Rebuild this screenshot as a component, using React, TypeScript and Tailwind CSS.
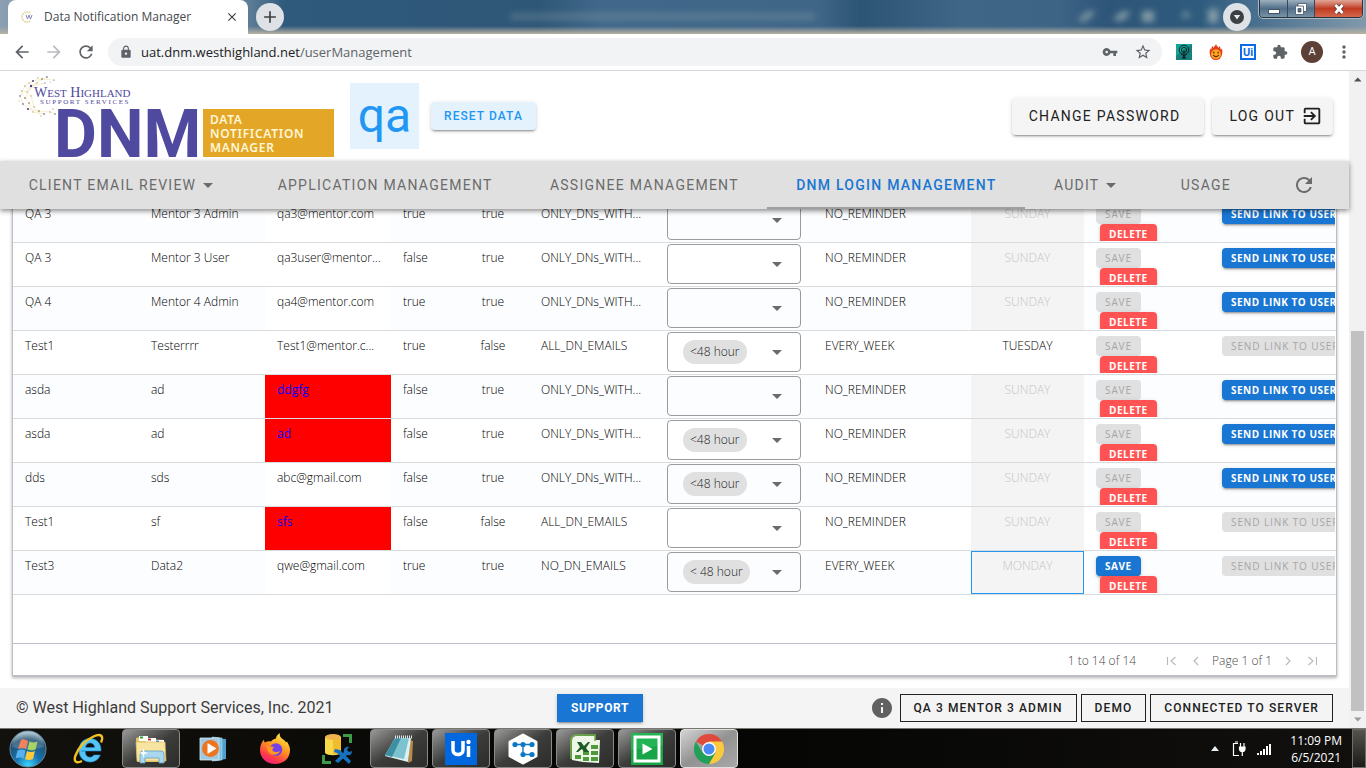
import React from "react";
import {
  MdArrowBack,
  MdArrowDropDown,
  MdArrowForward,
  MdClose,
  MdExitToApp,
  MdExtension,
  MdInfo,
  MdLock,
  MdMoreVert,
  MdRefresh,
  MdStarBorder,
  MdVpnKey,
  MdAdd,
} from "react-icons/md";

type Row = {
  first: string;
  last: string;
  email: string;
  invalid?: boolean;
  admin: string;
  active: string;
  mode: string;
  chip: string;
  reminder: string;
  day: string;
  dayEnabled?: boolean;
  focused?: boolean;
  canSave?: boolean;
  canSend?: boolean;
};

const rows: Row[] = [
  { first: "QA 3", last: "Mentor 3 Admin", email: "qa3@mentor.com", admin: "true", active: "true", mode: "ONLY_DNs_WITH...", chip: "", reminder: "NO_REMINDER", day: "SUNDAY", canSend: true },
  { first: "QA 3", last: "Mentor 3 User", email: "qa3user@mentor...", admin: "false", active: "true", mode: "ONLY_DNs_WITH...", chip: "", reminder: "NO_REMINDER", day: "SUNDAY", canSend: true },
  { first: "QA 4", last: "Mentor 4 Admin", email: "qa4@mentor.com", admin: "true", active: "true", mode: "ONLY_DNs_WITH...", chip: "", reminder: "NO_REMINDER", day: "SUNDAY", canSend: true },
  { first: "Test1", last: "Testerrrr", email: "Test1@mentor.c...", admin: "true", active: "false", mode: "ALL_DN_EMAILS", chip: "<48 hour", reminder: "EVERY_WEEK", day: "TUESDAY", dayEnabled: true },
  { first: "asda", last: "ad", email: "ddgfg", invalid: true, admin: "false", active: "true", mode: "ONLY_DNs_WITH...", chip: "", reminder: "NO_REMINDER", day: "SUNDAY", canSend: true },
  { first: "asda", last: "ad", email: "ad", invalid: true, admin: "false", active: "true", mode: "ONLY_DNs_WITH...", chip: "<48 hour", reminder: "NO_REMINDER", day: "SUNDAY", canSend: true },
  { first: "dds", last: "sds", email: "abc@gmail.com", admin: "false", active: "true", mode: "ONLY_DNs_WITH...", chip: "<48 hour", reminder: "NO_REMINDER", day: "SUNDAY", canSend: true },
  { first: "Test1", last: "sf", email: "sfs", invalid: true, admin: "false", active: "false", mode: "ALL_DN_EMAILS", chip: "", reminder: "NO_REMINDER", day: "SUNDAY" },
  { first: "Test3", last: "Data2", email: "qwe@gmail.com", admin: "true", active: "true", mode: "NO_DN_EMAILS", chip: "< 48 hour", reminder: "EVERY_WEEK", day: "MONDAY", focused: true, canSave: true },
];

const tabs = [
  { label: "CLIENT EMAIL REVIEW", menu: true },
  { label: "APPLICATION MANAGEMENT" },
  { label: "ASSIGNEE MANAGEMENT" },
  { label: "DNM LOGIN MANAGEMENT", active: true },
  { label: "AUDIT", menu: true },
  { label: "USAGE" },
];

const raised = "shadow-[0_3px_1px_-2px_rgba(0,0,0,0.2),0_2px_2px_0_rgba(0,0,0,0.14),0_1px_5px_0_rgba(0,0,0,0.12)]";

/* ---------- browser window ---------- */

function TitleBar() {
  return (
    <div className="relative flex h-[34px] shrink-0 items-start overflow-hidden bg-[linear-gradient(90deg,#8ba0b2_0,#6f8ba2_60px,#5c7c96_250px,#2f5a7c_285px,#2e5677_540px,#41688a_600px,#3f6587_820px,#2c5475_860px,#3f6587_960px,#3d6385_1060px,#2d5577_1110px,#2f5b7e_1200px,#4b7190_1260px,#8199ab_1366px)]">
      <svg className="absolute inset-0 h-full w-full" viewBox="0 0 1366 34" preserveAspectRatio="none" aria-hidden="true">
        <defs>
          <filter id="haze" x="-10%" y="-60%" width="120%" height="220%"><feGaussianBlur stdDeviation="3" /></filter>
          <linearGradient id="edge" x1="0" y1="0" x2="0" y2="1">
            <stop offset="0" stopColor="#b3ad9f" stopOpacity="0" />
            <stop offset="1" stopColor="#b9b3a4" />
          </linearGradient>
        </defs>
        <g filter="url(#haze)" fill="#9cb0b4">
          <rect x="510" y="13" width="305" height="7" opacity=".28" />
          <path d="M1078 20l10-9 8 1-12 10zM1112 20l10-9 9 1-8 9zM1142 11h12v11h-12zM1180 17l6-6 5 6zM1208 9h10v14h-10z" opacity=".75" />
        </g>
        <rect y="26" width="1366" height="8" fill="url(#edge)" />
      </svg>
      <div className="relative ml-2 flex h-[34px] w-60 items-center rounded-t-lg bg-white pr-2 pl-3 font-['Open_Sans',sans-serif] text-xs text-[#45494d]">
        <svg className="mr-2 h-4 w-4 shrink-0" viewBox="0 0 16 16" aria-hidden="true">
          <circle cx="7" cy="8" r="5" fill="none" stroke="#e3d7a8" strokeWidth="2" strokeDasharray="1.400 .8" pathLength="30" />
          <path d="M13 2v12" stroke="#fff" strokeWidth="4" />
          <path d="M6 6l1.500 4 1.500-4 1.500 4L12 6" fill="none" stroke="#8b85bd" strokeWidth="1" />
        </svg>
        <span className="flex-1 whitespace-nowrap">Data Notification Manager</span>
        <button aria-label="Close tab" className="grid h-4 w-4 place-items-center text-[#3c4043]"><MdClose className="h-3.5 w-3.5" /></button>
      </div>
      <button aria-label="New tab" className="relative mt-[3px] ml-2 grid h-7 w-7 place-items-center rounded-full bg-[#dee1e6] text-[#3c4043]"><MdAdd className="h-5 w-5" /></button>
      <button aria-label="Search tabs" className="relative mt-[3px] ml-auto grid h-7 w-7 place-items-center rounded-full bg-[#dee1e6]">
        <svg viewBox="0 0 14 14" className="h-3.5 w-3.5" aria-hidden="true"><circle cx="7" cy="7" r="7" fill="#3c4043" /><path d="M3.800 5h6.400L7 9.600z" fill="#e8eaed" /></svg>
      </button>
      <div className="relative mr-[3px] ml-2 flex h-[18px] overflow-hidden rounded-b border border-t-0 border-[#26343f] outline outline-[#a8b7c4]">
        <button aria-label="Minimize" className="grid w-7 place-items-center border-r border-[#34495a] bg-linear-to-b from-[#9db0be] via-[#52708a] to-[#7892a6]">
          <svg viewBox="0 0 14 12" className="h-3 w-3.5" aria-hidden="true"><rect x="1.500" y="6.500" width="11" height="4" fill="#fff" stroke="#455463" /></svg>
        </button>
        <button aria-label="Restore" className="grid w-[27px] place-items-center border-r border-[#34495a] bg-linear-to-b from-[#9db0be] via-[#52708a] to-[#7892a6]">
          <svg viewBox="0 0 14 14" className="h-3.5 w-3.5" aria-hidden="true"><g stroke="#455463" strokeWidth=".8"><path d="M4 1.500h8.500v8H4z" fill="#fff" /><path d="M1.500 4h8v8.500h-8z" fill="#fff" /><path d="M4 6.500h3V10H4z" fill="#52708a" /></g></svg>
        </button>
        <button aria-label="Close window" className="grid w-[47px] place-items-center bg-linear-to-b from-[#e0a598] via-[#bf3a20] to-[#d4664c]">
          <svg viewBox="0 0 14 12" className="h-3 w-3.5" aria-hidden="true"><path d="M3.500 2l7 8M10.500 2l-7 8" stroke="#5a3a38" strokeWidth="4.400" /><path d="M3.500 2l7 8M10.500 2l-7 8" stroke="#fff" strokeWidth="2.800" /></svg>
        </button>
      </div>
    </div>
  );
}

function AddressBar() {
  return (
    <div className="flex h-[37px] shrink-0 items-center border-b border-[#d5d7da] bg-white px-3 text-[#5f6368]">
      <button aria-label="Back" className="mr-3 grid h-5 w-5 place-items-center"><MdArrowBack className="h-5 w-5" /></button>
      <button aria-label="Forward" className="mr-3 grid h-5 w-5 place-items-center text-[#b9bbbe]"><MdArrowForward className="h-5 w-5" /></button>
      <button aria-label="Reload" className="mr-3 grid h-5 w-5 place-items-center"><MdRefresh className="h-5 w-5" /></button>
      <div className="flex h-7 flex-1 items-center rounded-full bg-[#f1f3f4] pr-2.5 pl-[11px]">
        <MdLock className="h-3.5 w-3.5" />
        <span className="ml-2 flex-1 pt-px font-['Open_Sans',sans-serif] text-[13px]"><span className="text-[#202124]">uat.dnm.westhighland.net</span>/userManagement</span>
        <button aria-label="Saved password" className="mr-4"><MdVpnKey className="h-4 w-4" /></button>
        <button aria-label="Bookmark"><MdStarBorder className="h-[18px] w-[18px]" /></button>
      </div>
      <div className="flex items-center gap-4 pl-3.5">
        <svg viewBox="0 0 16 16" className="h-4 w-4" aria-hidden="true"><path fill="#14a39a" d="M0 0h16v16H0z" /><path d="M0 12L16 0v16H0z" fill="#155e5b" opacity=".5" /><g fill="none" stroke="#0f2624" strokeWidth="1"><circle cx="8" cy="6" r="4.800" /><circle cx="8" cy="6" r="2.600" /><path d="M8 6v7M5 10l3 2 3-2" /></g><path d="M5.500 14.500L7.200 12h1.600l1.700 2.500z" fill="#0f2624" /></svg>
        <svg viewBox="0 0 16 16" className="h-4 w-4" aria-hidden="true"><path d="M8 0c.5 2 2 2.500 2.600 4 .5-.6.500-1.400.400-2 1.300 1 1.700 2.300 1.500 3.600.8-.1 1.200-.6 1.400-1.200C15 7 14.600 16 8 16S1 8 2.200 4.500c.2.700.6 1 1.200 1.200C3.300 3.500 4 2.500 5 2c0 1 .1 1.500.6 2C5.800 2.500 7.500 1.800 8 0z" fill="#e6391c" /><circle cx="8" cy="10.200" r="4.900" fill="#fba61c" /><path d="M5.800 7.800v1.800M10.200 7.800v1.800M5.200 11.200q2.800 2.800 5.600 0" fill="none" stroke="#5a2208" strokeWidth="1.200" /></svg>
        <span className="grid h-4 w-4 place-items-center border-2 border-[#0b6be8] bg-white font-['Roboto',sans-serif] text-[11px] leading-none font-bold text-[#0b6be8]">Ui</span>
        <MdExtension className="h-4 w-4" />
      </div>
      <span className="ml-[13px] grid h-[22px] w-[22px] place-items-center rounded-full bg-[#5d4037] font-['Roboto',sans-serif] text-[11px] text-white">A</span>
      <button aria-label="Menu" className="ml-[11px]"><MdMoreVert className="h-5 w-5" /></button>
    </div>
  );
}

/* ---------- application ---------- */

const dots: [number, number, number][] = [
  [30, 3, 0.8], [25, 5, 1.1], [21, 4, 0.7], [16, 7, 1], [12, 9, 0.7], [8, 12, 0.8], [14, 12, 1.2], [5, 17, 0.8],
  [10, 18, 0.7], [3, 22, 0.7], [8, 24, 1.1], [14, 22, 0.7], [6, 30, 0.8], [12, 29, 0.9], [17, 33, 0.8], [11, 35, 1.1],
  [16, 38, 0.7], [22, 37, 1], [27, 40, 0.8], [33, 38, 0.8], [36, 35, 0.7], [38, 40, 0.7], [20, 9, 0.7], [33, 8, 0.6],
  [28, 9, 0.6], [2, 27, 0.6], [24, 42, 0.6], [37, 6, 0.6],
];

function Logo() {
  return (
    <svg viewBox="0 0 320 84" className="h-[84px] w-80 shrink-0" role="img" aria-label="West Highland Support Services DNM">
      <g transform="translate(2 0)">
        <path d="M37 6L25 5 16 7 8 12 5 17 3 22 6 30 11 35 22 37 33 38 38 40M30 3L14 12 8 24 12 29 16 38 27 40M20 9L10 18 14 22 17 33 24 42M28 9L14 12 3 22" fill="none" stroke="#efe6bd" strokeWidth=".7" />
        {dots.map(([x, y, r], i) => <circle key={i} cx={x} cy={y} r={r} fill={i % 3 === 0 ? "#4a4280" : "#b3a266"} />)}
      </g>
      <g fill="#5049a0">
        <text x="19" y="23" fontFamily="Liberation Serif, serif" fontSize="14">W<tspan fontSize="11">EST</tspan> H<tspan fontSize="11">IGHLAND</tspan></text>
        <text x="25" y="30" fontFamily="Liberation Serif, serif" fontSize="7" letterSpacing="1.600">SUPPORT SERVICES</text>
        <text x="39" y="83" fontFamily="Roboto, sans-serif" fontSize="66" fontWeight="700">DNM</text>
      </g>
      <rect x="188" y="35" width="131" height="48" fill="#e3a626" />
      <g fill="#fff7d6" fontFamily="Noto Sans, sans-serif" fontSize="12" fontWeight="600" letterSpacing=".7">
        <text x="195" y="50">DATA</text>
        <text x="195" y="64">NOTIFICATION</text>
        <text x="195" y="78">MANAGER</text>
      </g>
    </svg>
  );
}

function Header() {
  return (
    <header className="flex h-[90px] shrink-0 items-center bg-white pr-4 pl-[15px] font-['Roboto',sans-serif]">
      <Logo />
      <div className="ml-[15px] grid h-[66px] w-[69px] place-items-center bg-[#e3f2fd] text-5xl leading-none text-[#2196f3]">qa</div>
      <button className={`ml-3 h-7 rounded bg-[#e3f2fd] px-[13px] text-xs font-medium tracking-[0.09em] text-[#2196f3] ${raised}`}>RESET DATA</button>
      <button className={`ml-auto h-[37px] rounded bg-[#f5f5f5] px-[17px] pr-6 text-sm tracking-[0.09em] text-[#212121] ${raised}`}>CHANGE PASSWORD</button>
      <button className={`ml-2 flex h-[37px] items-center gap-1.5 rounded bg-[#f5f5f5] pr-2.5 pl-[17px] text-sm tracking-[0.09em] text-[#212121] ${raised}`}>LOG OUT <MdExitToApp className="h-[22px] w-[22px]" /></button>
    </header>
  );
}

function NavBar() {
  return (
    <nav className="relative z-10 flex h-12 shrink-0 bg-[#e0e0e0] font-['Roboto',sans-serif] text-sm tracking-[0.09em] text-[#6b6b6b] shadow-[0_2px_5px_rgba(0,0,0,0.45)]">
      {tabs.map((t) => (
        <a
          key={t.label}
          href="#"
          className={`flex flex-auto items-center justify-center border-b-2 px-4 pt-0.5 whitespace-nowrap ${t.active ? "border-[#9e9e9e] font-medium text-[#1976d2]" : "border-transparent"}`}
        >
          {t.label}
          {t.menu && <MdArrowDropDown className="h-6 w-6" />}
        </a>
      ))}
      <button aria-label="Refresh" className="grid flex-auto place-items-center px-5"><MdRefresh className="h-6 w-6" /></button>
    </nav>
  );
}

function ChipSelect({ value, label }: { value: string; label: string }) {
  return (
    <label className="relative flex h-10 items-center rounded border border-[#9b9b9b] pr-[11px] pl-[15px]">
      {value && <span className="flex h-6 items-center rounded-full bg-[#e0e0e0] px-[7px] text-[#212121]">{value}</span>}
      <MdArrowDropDown className="ml-auto h-6 w-6 text-[#6b6b6b]" />
      <select aria-label={label} defaultValue={value} className="absolute inset-0 opacity-0">
        <option value={value}>{value}</option>
      </select>
    </label>
  );
}

const tiny = "h-5 shrink-0 rounded px-[9px] text-[10px] leading-5 whitespace-nowrap";
const tinyDisabled = `${tiny} bg-[#e0e0e0] font-medium tracking-[0.09em] text-[#a6a6a6]`;
const tinyPrimary = `${tiny} ${raised} bg-[#1976d2] font-bold tracking-wider text-white`;
const tinyDanger = `${tiny} ${raised} bg-[#ff5252] font-bold tracking-wider text-white`;

function UserTable() {
  return (
    <table className="w-full table-fixed border-separate border-spacing-0 font-['Open_Sans',sans-serif] text-xs leading-[18px] font-light text-black">
      <colgroup>
        <col className="w-[126px]" />
        <col className="w-[126px]" />
        <col className="w-[126px]" />
        <col className="w-[66px]" />
        <col className="w-[72px]" />
        <col className="w-[126px]" />
        <col className="w-[158px]" />
        <col className="w-[158px]" />
        <col className="w-[113px]" />
        <col className="w-[126px]" />
        <col className="w-[126px]" />
      </colgroup>
      <tbody>
        {rows.map((r, i) => {
          const line = `border-b border-[#d9dcde] align-top ${i % 2 ? "bg-white" : "bg-[#fcfdfe]"}`;
          const text = `${line} pl-3 pt-1.5 whitespace-nowrap`;
          return (
            <tr key={i} className="h-11">
              <td className={text}>{r.first}</td>
              <td className={text}>{r.last}</td>
              <td className={`border-b border-[#d9dcde] pt-1.5 pl-3 align-top whitespace-nowrap ${r.invalid ? "bg-[#ff0000] font-normal text-[#0000ff]" : "bg-white"}`}>{r.email}</td>
              <td className={text}>{r.admin}</td>
              <td className={`${line} pt-1.5 text-center`}>{r.active}</td>
              <td className={text}>{r.mode}</td>
              <td className={`${line} px-3 pt-px`}><ChipSelect value={r.chip} label={`Notification window for ${r.first} ${r.last}`} /></td>
              <td className={text}>{r.reminder}</td>
              <td className={`border-b border-[#d9dcde] p-0 text-center align-top ${r.dayEnabled ? "bg-white" : "bg-[#f4f4f4] text-[#c4c4c4]"}`}>
                <div className={`h-[43px] border pt-[5px] ${r.focused ? "border-[#2196f3]" : "border-transparent"}`}>{r.day}</div>
              </td>
              <td className={`${line} p-0`}>
                <div className="flex h-[42px] flex-col items-start overflow-hidden pt-[5px] pl-3">
                  <button disabled={!r.canSave} className={r.canSave ? tinyPrimary : tinyDisabled}>SAVE</button>
                  <button className={`${tinyDanger} ml-1`}>DELETE</button>
                </div>
              </td>
              <td className={`${line} p-0`}>
                <div className="mr-px flex h-[42px] items-start overflow-hidden pt-[5px] pl-3">
                  <button disabled={!r.canSend} className={r.canSend ? tinyPrimary : tinyDisabled}>SEND LINK TO USER</button>
                </div>
              </td>
            </tr>
          );
        })}
      </tbody>
    </table>
  );
}

function PageButton({ label, d }: { label: string; d: string }) {
  return (
    <button aria-label={label} className="text-[#b5b8bb]">
      <svg viewBox="0 0 12 12" className="h-3 w-3" fill="none" stroke="currentColor" strokeWidth="1.100" aria-hidden="true"><path d={d} /></svg>
    </button>
  );
}

function Grid() {
  return (
    <main className="flex min-h-0 flex-1 flex-col justify-end overflow-hidden bg-white px-3 pb-3">
      <section className="shrink-0 border border-[#babfc7] shadow-[0_2px_3px_rgba(0,0,0,0.3)]">
        <UserTable />
        <div className="mt-12 flex h-8 items-center justify-end border-t border-[#babfc7] pt-0.5 pr-[18px] font-['Open_Sans',sans-serif] text-xs font-light text-[#4a4a4a]">
          <span className="mr-[30px]">1 to 14 of 14</span>
          <PageButton label="First page" d="M1.500 2v8M9.500 2l-4.500 4 4.500 4" />
          <span className="w-3" />
          <PageButton label="Previous page" d="M8 2L4 6l4 4" />
          <span className="mx-2.5">Page 1 of 1</span>
          <PageButton label="Next page" d="M4 2l4 4-4 4" />
          <span className="w-3" />
          <PageButton label="Last page" d="M10.500 2v8M2.500 2L7 6l-4.500 4" />
        </div>
      </section>
    </main>
  );
}

function Footer() {
  const outlined = "h-7 border border-[#212121] px-[13px] text-xs font-medium tracking-[0.09em] text-[#212121]";
  return (
    <footer className="grid h-10 shrink-0 grid-cols-[541px_auto_1fr] items-center bg-[#f4f4f4] px-4 font-['Roboto',sans-serif]">
      <span className="text-base text-[#3c3c3c]">© West Highland Support Services, Inc. 2021</span>
      <button className={`h-7 bg-[#1976d2] px-3.5 text-xs font-bold tracking-wider text-white ${raised}`}>SUPPORT</button>
      <div className="flex items-center justify-end gap-1">
        <MdInfo className="mr-0.5 h-6 w-6 text-[#616161]" />
        <button className={outlined}>QA 3 MENTOR 3 ADMIN</button>
        <button className={outlined}>DEMO</button>
        <button className={outlined}>CONNECTED TO SERVER</button>
      </div>
    </footer>
  );
}

function Scrollbar() {
  return (
    <div className="flex w-[17px] shrink-0 flex-col items-center bg-[#f1f1f1]" aria-hidden="true">
      <svg viewBox="0 0 17 17" className="h-[17px] w-[17px] shrink-0"><path d="M5 10.500h7.500L8.750 6.500z" fill="#505050" /></svg>
      <div className="w-full flex-[243]" />
      <div className="w-[13px] flex-[380] bg-[#c1c1c1]" />
      <svg viewBox="0 0 17 17" className="h-[17px] w-[17px] shrink-0"><path d="M5 6.500h7.500L8.750 10.500z" fill="#9a9a9a" /></svg>
    </div>
  );
}

/* ---------- desktop taskbar ---------- */

const pinned: { name: string; frame?: "open" | "active"; art: React.ReactNode }[] = [
  {
    name: "Internet Explorer",
    art: (
      <svg viewBox="0 0 32 32" className="h-8 w-8">
        <path d="M8 18h20c.6-8-5-12.500-11-12.500C10 5.500 6 11 6 17.500S10.500 29 17 29c5 0 8.500-2.500 10.300-7h-6.500c-.8 1.500-2 2.200-3.800 2.200-3 0-4.700-2-4.800-6.200zm4.500-3.500c.4-3 2-4.600 4.700-4.600 2.600 0 4.200 1.600 4.500 4.600z" fill="#55c4f5" stroke="#1d8fd6" strokeWidth=".6" />
        <path d="M28 9.500C31 3 28 0 20.500 3.500 12 7.500 5 15 2.300 23c-1.700 5.500.7 8 6.700 5" fill="none" stroke="#f4c11f" strokeWidth="2.400" />
      </svg>
    ),
  },
  {
    name: "File Explorer",
    frame: "open",
    art: (
      <svg viewBox="0 0 34 32" className="h-8 w-[34px]">
        <path d="M2 5l9-2 2 3 17 1 1 22H3z" fill="#e9c869" />
        <path d="M5 3h9v5H5z" fill="#fff" /><path d="M6 3.500h3v2H6z" fill="#2ca02c" />
        <path d="M12 5h10v5H12z" fill="#fff" /><path d="M14 5.500h3v2h-3z" fill="#d03a2b" />
        <path d="M20 7h10v5H20z" fill="#fff" /><path d="M22 7.500h3v2h-3z" fill="#2f86e0" />
        <path d="M2 9h29l1 19H3z" fill="#f7e4a0" stroke="#d9b859" strokeWidth=".7" />
        <path d="M6 30V21q0-3 3-3h18q3 0 3 3v9h-5v-5H11v5z" fill="#a9d8ee" stroke="#5f9fc0" strokeWidth=".8" />
        <path d="M9.500 15l1 4 4 1-4 1-1 4-1-4-4-1 4-1z" fill="#fff" />
      </svg>
    ),
  },
  {
    name: "Media Player",
    art: (
      <svg viewBox="0 0 30 30" className="h-[30px] w-[30px]">
        <path d="M16 4l12 1v20l-12 2z" fill="#4e9fca" /><path d="M14 3l10 1v22l-10 1z" fill="#78bfe0" stroke="#c9e8f5" strokeWidth=".5" />
        <path d="M2 4h19v22H2z" fill="#9fc9e0" stroke="#d6ecf6" strokeWidth=".8" />
        <circle cx="12.500" cy="14.500" r="8.500" fill="#ef7420" /><path d="M9.500 9l9 5.500-9 5.500z" fill="#fff" />
      </svg>
    ),
  },
  {
    name: "Firefox",
    art: (
      <svg viewBox="0 0 32 32" className="h-8 w-8">
        <defs><linearGradient id="fx" x1=".8" y1="0" x2=".3" y2="1"><stop offset="0" stopColor="#fff04a" /><stop offset=".45" stopColor="#ff9a1f" /><stop offset=".8" stopColor="#ff3a4a" /><stop offset="1" stopColor="#e8207a" /></linearGradient></defs>
        <path d="M21 0c-1 3 1 5 4 7 1 .8 1.700 1.500 2 2.500l1-1c2 3.500 3 6 3 8.500 0 8.500-6.500 14-15 14S1 25 1 17C1 13 2.500 9 5 6.500c0 1.500.3 2.200 1 3 2-1 4-1.500 6-1 1-1.500 3-2.700 5-3C17 3.500 18.500 1.500 21 0z" fill="url(#fx)" />
        <circle cx="17" cy="16.500" r="6.300" fill="#7542e5" />
        <path d="M7 13c3-1 5 1 8 1l-2 3c2 2 4 3 8 1-2 5-10 5-12 0-.7-2-1-3-2-5z" fill="#ff9a1f" />
      </svg>
    ),
  },
  {
    name: "Database Tools",
    art: (
      <svg viewBox="0 0 32 32" className="h-8 w-8">
        <path d="M4 4v16c3 3 13 3 16 0V4z" fill="#f9d84a" /><path d="M12 6h8v15h-8z" fill="#f2bc30" /><ellipse cx="12" cy="4" rx="8" ry="3" fill="#f0b54a" />
        <path d="M22 1h9v9h-3V4h-6zM1 22h3v6h6v3H1z" fill="#3f9a45" />
        <path d="M14 16l5 1 11 11-2 3-12-11-3-1zM28 14l-2 3 2 2 3-1c0 4-3 5-5 4l-9 8-3-2 9-9c-1-3 2-6 5-5z" fill="#1670bd" />
      </svg>
    ),
  },
  {
    name: "Notepad",
    frame: "open",
    art: (
      <svg viewBox="0 0 32 32" className="h-8 w-8">
        <path d="M27 7l3 1-1 20-4 2z" fill="#b98a45" />
        <path d="M12 5h16l-3 24-23-6z" fill="#dceff2" />
        <path d="M12 5h14l-5 21-19-4z" fill="#7cc3cf" />
        <path d="M12 5h6L9 24l-7-2z" fill="#3f8fa2" />
        <path d="M12 4h17" stroke="#dfe7e8" strokeWidth="3" strokeDasharray="1 1" />
      </svg>
    ),
  },
  {
    name: "UiPath",
    frame: "open",
    art: (
      <span className="grid h-8 w-8 place-items-center bg-[#0067df]">
        <svg viewBox="0 0 32 32" className="h-8 w-8"><path d="M8 8v9c0 6 10 6 10 0V8M23.500 13v11" fill="none" stroke="#fff" strokeWidth="3.500" /><circle cx="23.500" cy="9" r="2.200" fill="#fff" /></svg>
      </span>
    ),
  },
  {
    name: "Orchestrator",
    frame: "open",
    art: (
      <svg viewBox="0 0 32 32" className="h-8 w-8">
        <path d="M16 2l13 7v14l-13 7L3 23V9z" fill="#fff" stroke="#fff" strokeWidth="3" strokeLinejoin="round" />
        <g stroke="#0d78c4" strokeWidth="1.400" fill="none"><path d="M8 11.500h17M16 11.500v10h9" /></g>
        <g fill="#0d78c4"><circle cx="8" cy="11.500" r="2.600" /><circle cx="16" cy="11.500" r="2.600" /><circle cx="25" cy="11.500" r="2.600" /><circle cx="16" cy="21.500" r="2.600" /><circle cx="25" cy="21.500" r="2.600" /></g>
      </svg>
    ),
  },
  {
    name: "Excel",
    frame: "open",
    art: (
      <svg viewBox="0 0 32 32" className="h-8 w-8">
        <path d="M8 3h18v4h5l-1 23-16-1-11-2V8q0-5 5-5z" fill="#eef6e8" /><path d="M2 26V8q0-6 6-6h18v6" fill="none" stroke="#6fb244" strokeWidth="1.600" />
        <g fill="#4f9a3a"><path d="M22 12h7v4h-7zM22 18h7v4h-7zM22 24h7v4h-7zM14 18h6v4h-6zM14 24h6v4h-6zM6 22h6v4H6z" /></g>
        <path d="M8 9h4l3 4 4-4h2l-4 6 3 4h-5l-2-3-4 3H7l4-5z" fill="#1d5c22" />
      </svg>
    ),
  },
  {
    name: "Recorder",
    frame: "open",
    art: (
      <svg viewBox="0 0 32 32" className="h-8 w-8"><path d="M0 0h32v32H0z" fill="#22b455" /><path d="M0 17l32-5v20H0z" fill="#18a548" /><path d="M4 4h24v24H4z" fill="none" stroke="#fff" strokeWidth="3" /><path d="M11.500 10.500l10 5.500-10 5.500z" fill="#fff" /></svg>
    ),
  },
  {
    name: "Chrome",
    frame: "active",
    art: (
      <svg viewBox="0 0 30 30" className="h-[30px] w-[30px]">
        <path d="M15 15L2 7.500A15 15 0 0 1 28 7.500z" fill="#df4a3c" /><path d="M15 15V7.500h13A15 15 0 0 1 15 30z" fill="#fbc93d" />
        <path d="M15 15l6.500 3.750L15 30A15 15 0 0 1 2 7.500l6.500 11.250z" fill="#22a05a" />
        <circle cx="15" cy="15" r="6.900" fill="#fff" /><circle cx="15" cy="15" r="5.500" fill="#4a8af4" />
      </svg>
    ),
  },
];

function Taskbar() {
  return (
    <div className="flex h-10 shrink-0 items-stretch border-t border-[#77776f] bg-linear-to-r from-[#12110d] via-[#050504] to-[#11100e]">
      <button aria-label="Start" className="mr-1 grid w-14 place-items-center">
        <svg viewBox="0 0 38 38" className="h-[38px] w-[38px]" aria-hidden="true">
          <defs><radialGradient id="orb" cx=".5" cy=".95" r=".9"><stop offset="0" stopColor="#3ad6ff" /><stop offset=".4" stopColor="#1670ac" /><stop offset=".8" stopColor="#22506f" /><stop offset="1" stopColor="#9bb8c8" /></radialGradient></defs>
          <circle cx="19" cy="19" r="18" fill="url(#orb)" stroke="#68899b" />
          <path d="M12 10q3-2 7 1l-2 8q-4-2-8 0z" fill="#f1693a" /><path d="M20.500 11.500q4 2 8 0l-2 8q-4 2-8 0z" fill="#9bcb45" />
          <path d="M8.500 20.500q4-2 8 0l-2 8q-4-2-8 0z" fill="#58b0ec" /><path d="M18 21q4 2 8 0l-2 8q-4 2-8 0z" fill="#fcc93d" />
          <path d="M3 17a16 16 0 0 1 32 0q-16 5-32 0z" fill="#fff" opacity=".17" />
        </svg>
      </button>
      <div className="flex gap-1">
        {pinned.map((p) => (
          <button
            key={p.name}
            aria-label={p.name}
            className={
              p.frame === "active"
                ? "grid w-[58px] place-items-center rounded-sm border border-[#e0e0e0] bg-linear-to-br from-[#d5d5d5] via-[#929292] to-[#a8a8a8]"
                : p.frame === "open"
                  ? "grid w-[58px] place-items-center rounded-sm border border-[#8a8a8a] bg-linear-to-br from-[#9a9a9a] via-[#3c3c3a] to-[#2c2c2a]"
                  : "grid w-[58px] place-items-center"
            }
          >
            {p.art}
          </button>
        ))}
      </div>
      <div className="ml-auto flex items-center text-white">
        <svg viewBox="0 0 8 5" className="mr-3 h-[5px] w-2" aria-hidden="true"><path d="M0 5h8L4 0z" fill="#e8eef2" /></svg>
        <svg viewBox="0 0 16 16" className="mr-2.5 h-4 w-4" fill="none" stroke="#fff" strokeWidth="1.200" aria-label="Power" role="img">
          <path d="M8 14.500H2.500v-12H7M4 1h3" /><path d="M8.500 6h5.500v2q0 2.500-2.700 2.500T8.500 8z" fill="#fff" /><path d="M9.500 2v4M13 2v4M11.300 10v5" />
        </svg>
        <svg viewBox="0 0 15 12" className="h-3 w-[15px]" fill="#fff" aria-label="Network" role="img"><path d="M0 10h2v2H0zM3 8h2v4H3zM6 6h2v6H6zM9 3h2v9H9zM12 1h2v11h-2z" /></svg>
        <div className="mr-2.5 ml-[18px] text-center font-['Open_Sans',sans-serif] text-xs leading-[17px]">11:09 PM<br />6/5/2021</div>
        <button aria-label="Show desktop" className="h-full w-3.5 border border-[#6d6d6a] bg-linear-to-b from-[#55554f] to-[#1b1b19]" />
      </div>
    </div>
  );
}

export default function App() {
  return (
    <div className="flex h-screen flex-col overflow-hidden bg-white">
      <TitleBar />
      <AddressBar />
      <div className="flex min-h-0 flex-1">
        <div className="flex min-w-0 flex-1 flex-col">
          <Header />
          <NavBar />
          <Grid />
          <Footer />
        </div>
        <Scrollbar />
      </div>
      <Taskbar />
    </div>
  );
}
